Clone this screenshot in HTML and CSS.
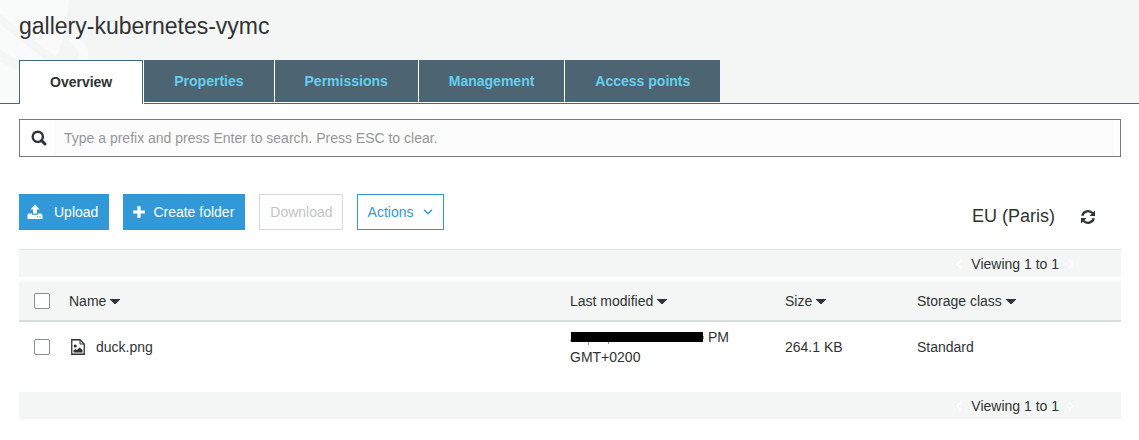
FILE: index.html
```html
<!DOCTYPE html>
<html lang="en">
<head>
<meta charset="utf-8">
<title>gallery-kubernetes-vymc</title>
<link rel="stylesheet" href="styles.css">
</head>
<body>
<header class="header">
  <svg class="watermark" width="100" height="103" viewBox="0 0 100 103" aria-hidden="true">
    <path fill="#f9fbfa" d="M0 0H69Q67 22 59 52L55 56Q28 36 0 14ZM0 24Q25 44 46 60L19 61L0 50ZM0 62L19 70V103H0ZM66 39Q84 35 88 51L88 60H80Q79 46 66 39Z"/>
  </svg>
  <h1 class="title">gallery-kubernetes-vymc</h1>
  <nav class="tabs">
    <a class="tab active" href="#" aria-current="page">Overview</a>
    <a class="tab" href="#">Properties</a>
    <a class="tab" href="#">Permissions</a>
    <a class="tab" href="#">Management</a>
    <a class="tab" href="#">Access points</a>
  </nav>
</header>
<main class="content">
  <div class="search">
    <label class="search-label" for="prefix" aria-label="Search">
      <svg width="16" height="16" viewBox="0 0 16 16"><circle cx="6.8" cy="6.8" r="5.1" fill="none" stroke="#2f3333" stroke-width="2.4"/><path d="M10.6 10.6L14 14" stroke="#2f3333" stroke-width="2.9" stroke-linecap="round"/></svg>
    </label>
    <input class="search-input" id="prefix" type="text" placeholder="Type a prefix and press Enter to search. Press ESC to clear.">
  </div>
  <div class="toolbar">
    <button class="btn primary upload" type="button">
      <svg width="16" height="16" viewBox="0 0 16 16" fill="#fff"><path d="M8 .5L12.5 5.5H10V9.5H6V5.5H3.5Z"/><path fill-rule="evenodd" d="M1.5 9.5H5V10.8H11V9.5H14L15.5 11V15H.5V11ZM10 12.3V13.6H11V12.3ZM12.5 12.3V13.6H13.5V12.3Z"/></svg>
      Upload</button>
    <button class="btn primary create" type="button">
      <svg width="12" height="12" viewBox="0 0 12 12"><path d="M6 1.3V10.7M1.3 6H10.7" stroke="#fff" stroke-width="3.2" stroke-linecap="square"/></svg>
      Create folder</button>
    <button class="btn download" type="button" disabled>Download</button>
    <button class="btn outline" type="button">Actions
      <svg width="10" height="6" viewBox="0 0 10 6"><path d="M1 .8L5 4.8L9 .8" fill="none" stroke="#3199d8" stroke-width="1.4"/></svg></button>
    <span class="region">EU (Paris)</span>
    <button class="refresh" type="button" aria-label="Refresh">
      <svg width="14" height="14" viewBox="0 0 14 14"><path d="M1.3 5.8A5.8 5.6 0 0 1 11.6 3.4M12.7 8.2A5.8 5.6 0 0 1 2.4 10.6" fill="none" stroke="#2f3333" stroke-width="2.3"/><path d="M14 .5V6H8.5ZM0 13.5V8H5.5Z" fill="#2f3333"/></svg>
    </button>
  </div>
  <div class="pager top">
    <svg width="6" height="10" viewBox="0 0 6 10"><path d="M5 1L1 5L5 9"/></svg>
    <span>Viewing 1 to 1</span>
    <svg width="6" height="10" viewBox="0 0 6 10"><path d="M1 1L5 5L1 9"/></svg>
  </div>
  <table class="files">
    <colgroup><col class="col-check"><col><col class="col-date"><col class="col-size"><col class="col-class"></colgroup>
    <thead>
      <tr>
        <th class="check"><input type="checkbox" aria-label="Select all"></th>
        <th>Name<svg class="caret" width="10" height="5" viewBox="0 0 10 5"><path d="M0 0H10V.6L5.6 5H4.4L0 .6Z"/></svg></th>
        <th>Last modified<svg class="caret" width="10" height="5" viewBox="0 0 10 5"><path d="M0 0H10V.6L5.6 5H4.4L0 .6Z"/></svg></th>
        <th>Size<svg class="caret" width="10" height="5" viewBox="0 0 10 5"><path d="M0 0H10V.6L5.6 5H4.4L0 .6Z"/></svg></th>
        <th>Storage class<svg class="caret" width="10" height="5" viewBox="0 0 10 5"><path d="M0 0H10V.6L5.6 5H4.4L0 .6Z"/></svg></th>
      </tr>
    </thead>
    <tbody>
      <tr>
        <td class="check"><input type="checkbox" aria-label="Select duck.png"></td>
        <td><span class="file"><svg width="14" height="16" viewBox="0 0 14 16"><path d="M.75.75H9L13.25 5V15.25H.75Z" fill="#fff" stroke="#2f3333" stroke-width="1.3"/><path d="M9 1V5H13" fill="none" stroke="#2f3333"/><circle cx="4.2" cy="7" r="1.6" fill="#2f3333"/><path d="M2.5 13.5V11.5L4.5 10L6 11L8.5 8.5L11.5 11V13.5Z" fill="#2f3333"/></svg>duck.png</span></td>
        <td><svg class="redacted" width="134" height="13" viewBox="0 0 134 13"><path d="M1 0H133V10H1Z" fill="#000"/><path d="M0 7.5H1V9H0ZM18 10H19V13H18ZM38 10H39V12H38ZM133 4H134V7H133Z" fill="#999"/></svg> PM<br>GMT+0200</td>
        <td>264.1 KB</td>
        <td>Standard</td>
      </tr>
    </tbody>
  </table>
  <div class="pager">
    <svg width="6" height="10" viewBox="0 0 6 10"><path d="M5 1L1 5L5 9"/></svg>
    <span>Viewing 1 to 1</span>
    <svg width="6" height="10" viewBox="0 0 6 10"><path d="M1 1L5 5L1 9"/></svg>
  </div>
</main>
</body>
</html>
```
FILE: styles.css
```css
* { box-sizing: border-box; }
body {
  margin: 0;
  background: #fff;
  color: #2f3333;
  font: 14px/20px "Liberation Sans", Arial, sans-serif;
}
button, input { font: inherit; }
svg { flex: none; }
.header {
  position: relative;
  padding: 12px 19px 0;
  background: #f4f6f6;
  border-bottom: 1px solid #4d6472;
}
.watermark { position: absolute; left: 0; top: 0; }
.title {
  position: relative;
  margin: 0 0 20px;
  font-size: 23px;
  line-height: 28px;
  font-weight: 400;
}
.tabs {
  position: relative;
  display: flex;
  align-items: flex-start;
  gap: 1px;
  margin-bottom: -1px;
}
.tab {
  height: 42px;
  padding: 0 30px;
  background: #4d6472;
  color: #67cff0;
  font-weight: 700;
  line-height: 42px;
  text-decoration: none;
  box-shadow: 1px 1px 0 #fff;
}
.tab:last-child { box-shadow: 0 1px 0 #fff; }
.tab.active {
  height: 44px;
  border: 1px solid #4d6472;
  border-bottom: 0;
  background: #fff;
  color: #2f3333;
}
.content { padding: 15px 18px 20px 19px; }
.search {
  display: flex;
  height: 38px;
  padding-right: 6px;
  border: 1px solid #777b7d;
}
.search-label {
  display: flex;
  align-items: center;
  justify-content: center;
  width: 34px;
  padding-left: 4px;
}
.search-input {
  flex: 1;
  min-width: 0;
  padding: 0 10px;
  border: 0;
  background: #fcfcfc;
  color: #2f3333;
}
.search-input::placeholder { color: #969696; opacity: 1; }
.toolbar {
  display: flex;
  align-items: center;
  gap: 14px;
  margin: 37px 0 19px;
}
.btn {
  display: flex;
  align-items: center;
  height: 36px;
  padding: 0 10px;
  border: 1px solid #d5d8d8;
  background: #fff;
  color: #c2c5c5;
}
.btn.primary { border-color: #3199d8; background: #3199d8; color: #fff; }
.btn.outline { gap: 9px; border-color: #3199d8; color: #3199d8; }
.btn.upload { gap: 11px; padding-left: 7px; }
.btn.create { gap: 8px; padding-left: 9px; }
.btn.download { padding-right: 9px; }
.region { margin-left: auto; padding-top: 8px; font-size: 18px; }
.refresh {
  display: flex;
  margin-right: 26px;
  margin-left: 12px;
  padding: 9px 0 0;
  border: 0;
  background: none;
}
.pager {
  display: flex;
  align-items: center;
  justify-content: flex-end;
  gap: 9px;
  height: 27px;
  padding-right: 47px;
  background: #f4f6f6;
}
.pager.top { height: 28px; margin-bottom: 4px; border-top: 1px solid #dee1e1; }
.pager path { fill: none; stroke: #fff; stroke-width: 1.4; }
.files {
  width: 100%;
  margin-bottom: 20px;
  border-collapse: separate;
  border-spacing: 0;
  table-layout: fixed;
}
.col-check { width: 50px; }
.col-date { width: 215px; }
.col-size { width: 132px; }
.col-class { width: 204px; }
.files th, .files td { padding: 0; text-align: left; font-weight: 400; }
.files th { height: 41px; border-bottom: 2px solid #d9dcdc; background: #f4f6f6; }
.files td { height: 50px; }
.files .check { padding-left: 15px; }
.files input {
  display: block;
  width: 16px;
  height: 16px;
  margin: 0;
  appearance: none;
  border: 1px solid #879090;
  border-radius: 2px;
  background: #fff;
}
.caret { margin-left: 4px; vertical-align: 2px; fill: #2f3333; }
.file { display: flex; align-items: center; gap: 11px; padding-left: 2px; }
.redacted { vertical-align: -3px; }
```
